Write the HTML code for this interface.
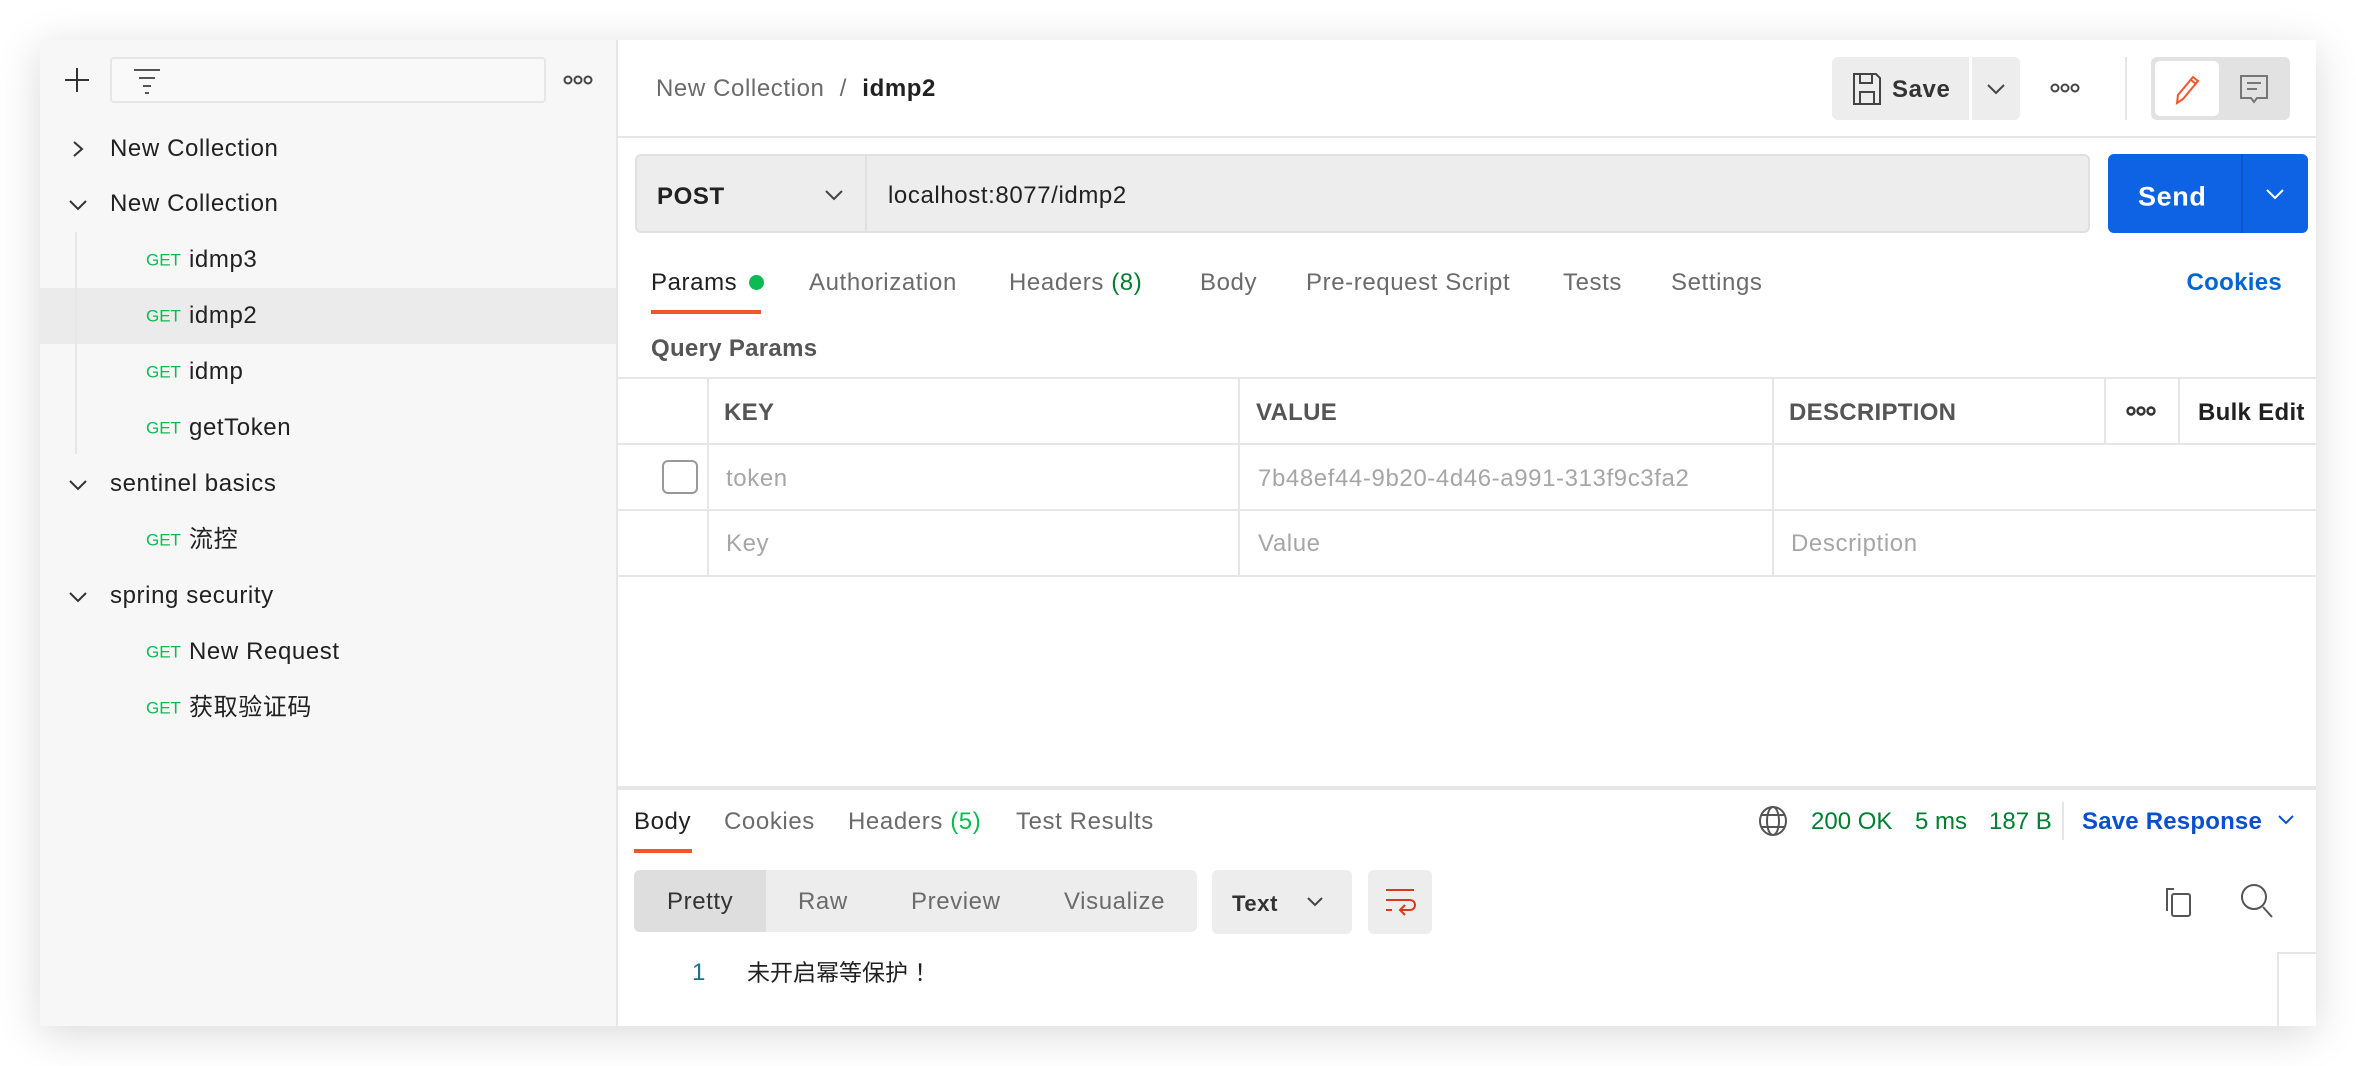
<!DOCTYPE html>
<html><head><meta charset="utf-8"><style>
*{box-sizing:border-box;margin:0;padding:0}
body{width:2356px;height:1066px;background:#fff;font-family:"Liberation Sans","Noto Sans CJK SC",sans-serif;color:#212121;position:relative;overflow:hidden;font-size:24px;letter-spacing:0.6px}
.a{position:absolute;white-space:nowrap}
.win{position:absolute;left:40px;top:40px;width:2276px;height:986px;background:#fff;box-shadow:0 8px 40px rgba(0,0,0,.15);overflow:hidden}
.t{position:absolute;white-space:nowrap;line-height:1;transform:translateY(calc(-50% + 2px))}
.g{color:#6b6b6b}
.get{color:#0cbb52;font-size:17px;letter-spacing:0}
.hl{position:absolute;height:2px;background:#e6e6e6}
.vl{position:absolute;width:2px;background:#e6e6e6}
</style></head><body>
<div class="win">
<div class="a" style="left:0;top:0;width:578px;height:986px;background:#f7f7f7;border-right:2px solid #e6e6e6"></div>
<svg class="a" style="left:24px;top:27px" width="26" height="26"><path d="M13 1v24M1 13h24" stroke="#333" stroke-width="2"/></svg>
<div class="a" style="left:70px;top:17px;width:436px;height:46px;border:2px solid #e6e6e6;border-radius:4px;background:#f9f9f9"></div>
<svg class="a" style="left:92px;top:28px" width="30" height="26"><path d="M2 2h26M7 10h16M11 18h8M13 25h4" stroke="#555" stroke-width="2"/></svg>
<svg class="a" style="left:523px;top:34px" width="30" height="12"><g stroke="#444" stroke-width="2" fill="none"><circle cx="5" cy="6" r="3.5"/><circle cx="15" cy="6" r="3.5"/><circle cx="25" cy="6" r="3.5"/></g></svg>

<svg class="a" style="left:31px;top:100px" width="14" height="18"><path d="M3 2l8 7-8 7" stroke="#333" stroke-width="2" fill="none"/></svg>
<div class="t" style="left:70px;top:107px">New Collection</div>
<svg class="a" style="left:28px;top:158px" width="20" height="14"><path d="M2 3l8 8 8-8" stroke="#333" stroke-width="2" fill="none"/></svg>
<div class="t" style="left:70px;top:162px">New Collection</div>
<div class="a" style="left:0;top:248px;width:576px;height:56px;background:#ebebeb"></div>
<div class="vl" style="left:35px;top:192px;height:222px"></div>
<div class="t get" style="left:106px;top:218px">GET</div><div class="t" style="left:149px;top:218px">idmp3</div>
<div class="t get" style="left:106px;top:274px">GET</div><div class="t" style="left:149px;top:274px">idmp2</div>
<div class="t get" style="left:106px;top:330px">GET</div><div class="t" style="left:149px;top:330px">idmp</div>
<div class="t get" style="left:106px;top:386px">GET</div><div class="t" style="left:149px;top:386px">getToken</div>
<svg class="a" style="left:28px;top:438px" width="20" height="14"><path d="M2 3l8 8 8-8" stroke="#333" stroke-width="2" fill="none"/></svg>
<div class="t" style="left:70px;top:442px">sentinel basics</div>
<div class="t get" style="left:106px;top:498px">GET</div><div class="t" style="left:149px;top:498px">流控</div>
<svg class="a" style="left:28px;top:550px" width="20" height="14"><path d="M2 3l8 8 8-8" stroke="#333" stroke-width="2" fill="none"/></svg>
<div class="t" style="left:70px;top:554px">spring security</div>
<div class="t get" style="left:106px;top:610px">GET</div><div class="t" style="left:149px;top:610px">New Request</div>
<div class="t get" style="left:106px;top:666px">GET</div><div class="t" style="left:149px;top:666px">获取验证码</div>

<div class="t g" style="left:616px;top:47px">New Collection <span style="margin:0 8px">/</span> <b style="color:#212121">idmp2</b></div>
<div class="a" style="left:1792px;top:17px;width:137px;height:63px;background:#ededed;border-radius:6px 0 0 6px"></div>
<svg class="a" style="left:1812px;top:32px" width="30" height="34"><path d="M2 2h22l4 4v26H2zM8 2v9h12V2M8 32V20h14v12" stroke="#444" stroke-width="2" fill="none"/></svg>
<div class="t" style="left:1852px;top:48px;color:#333;font-weight:bold">Save</div>
<div class="a" style="left:1932px;top:17px;width:48px;height:63px;background:#ededed;border-radius:0 6px 6px 0"></div>
<svg class="a" style="left:1946px;top:42px" width="20" height="14"><path d="M2 3l8 8 8-8" stroke="#444" stroke-width="2" fill="none"/></svg>
<svg class="a" style="left:2010px;top:42px" width="30" height="12"><g stroke="#444" stroke-width="2" fill="none"><circle cx="5" cy="6" r="3.5"/><circle cx="15" cy="6" r="3.5"/><circle cx="25" cy="6" r="3.5"/></g></svg>
<div class="vl" style="left:2085px;top:17px;height:63px"></div>
<div class="a" style="left:2111px;top:17px;width:139px;height:63px;background:#e2e2e2;border-radius:6px"></div>
<div class="a" style="left:2115px;top:21px;width:64px;height:55px;background:#fff;border-radius:5px"></div>
<svg class="a" style="left:2132px;top:33px" width="30" height="32"><path d="M5 30l1-8 15-18 5 4-15 18z M19 7l5 4" stroke="#f2542d" stroke-width="2" fill="none"/></svg>
<svg class="a" style="left:2199px;top:34px" width="30" height="32"><path d="M2 2h26v22H18l-3 4-3-4H2zM8 9h14M8 15h10" stroke="#777" stroke-width="2" fill="none"/></svg>
<div class="hl" style="left:578px;top:96px;width:1698px"></div>

<div class="a" style="left:595px;top:114px;width:1455px;height:79px;background:#ededed;border:2px solid #e0e0e0;border-radius:6px"></div>
<div class="vl" style="left:825px;top:116px;height:75px;background:#e0e0e0"></div>
<div class="t" style="left:617px;top:155px;font-weight:bold">POST</div>
<svg class="a" style="left:784px;top:148px" width="20" height="14"><path d="M2 3l8 8 8-8" stroke="#444" stroke-width="2" fill="none"/></svg>
<div class="t" style="left:848px;top:154px">localhost:8077/idmp2</div>
<div class="a" style="left:2068px;top:114px;width:200px;height:79px;background:#0d63e3;border-radius:6px"></div>
<div class="vl" style="left:2201px;top:114px;height:79px;background:#0b57c8"></div>
<div class="t" style="left:2098px;top:155px;color:#fff;font-weight:bold;font-size:27px">Send</div>
<svg class="a" style="left:2225px;top:147px" width="20" height="14"><path d="M2 3l8 8 8-8" stroke="#fff" stroke-width="2" fill="none"/></svg>

<div class="t" style="left:611px;top:241px">Params <span style="display:inline-block;width:15px;height:15px;border-radius:50%;background:#0cbb52;margin-left:4px"></span></div>
<div class="a" style="left:611px;top:270px;width:110px;height:4px;background:#f2542d"></div>
<div class="t g" style="left:769px;top:241px">Authorization</div>
<div class="t g" style="left:969px;top:241px">Headers <span style="color:#007f31">(8)</span></div>
<div class="t g" style="left:1160px;top:241px">Body</div>
<div class="t g" style="left:1266px;top:241px">Pre-request Script</div>
<div class="t g" style="left:1523px;top:241px">Tests</div>
<div class="t g" style="left:1631px;top:241px">Settings</div>
<div class="t" style="right:34px;top:241px;color:#0265d2;font-weight:bold;letter-spacing:0.3px">Cookies</div>
<div class="t g" style="left:611px;top:307px;font-weight:bold;color:#555;letter-spacing:0.3px">Query Params</div>

<div class="hl" style="left:578px;top:337px;width:1698px"></div>
<div class="hl" style="left:578px;top:403px;width:1698px"></div>
<div class="hl" style="left:578px;top:469px;width:1698px"></div>
<div class="hl" style="left:578px;top:535px;width:1698px"></div>
<div class="vl" style="left:667px;top:337px;height:200px"></div>
<div class="vl" style="left:1198px;top:337px;height:200px"></div>
<div class="vl" style="left:1732px;top:337px;height:200px"></div>
<div class="vl" style="left:2064px;top:337px;height:68px"></div>
<div class="vl" style="left:2138px;top:337px;height:68px"></div>
<div class="t" style="left:684px;top:371px;font-weight:bold;color:#555;letter-spacing:0.3px">KEY</div>
<div class="t" style="left:1216px;top:371px;font-weight:bold;color:#555;letter-spacing:0.3px">VALUE</div>
<div class="t" style="left:1749px;top:371px;font-weight:bold;color:#555;letter-spacing:0.3px">DESCRIPTION</div>
<svg class="a" style="left:2086px;top:365px" width="30" height="12"><g stroke="#333" stroke-width="2.4" fill="none"><circle cx="5" cy="6" r="3.5"/><circle cx="15" cy="6" r="3.5"/><circle cx="25" cy="6" r="3.5"/></g></svg>
<div class="t" style="left:2158px;top:371px;font-weight:bold;letter-spacing:0.3px">Bulk Edit</div>
<div class="a" style="left:622px;top:420px;width:36px;height:34px;border:2px solid #999;border-radius:6px"></div>
<div class="t" style="left:686px;top:437px;color:#a6a6a6">token</div>
<div class="t" style="left:1218px;top:437px;color:#a6a6a6">7b48ef44-9b20-4d46-a991-313f9c3fa2</div>
<div class="t" style="left:686px;top:502px;color:#a6a6a6">Key</div>
<div class="t" style="left:1218px;top:502px;color:#a6a6a6">Value</div>
<div class="t" style="left:1751px;top:502px;color:#a6a6a6">Description</div>

<div class="a" style="left:578px;top:746px;width:1698px;height:4px;background:#e6e6e6"></div>
<div class="t" style="left:594px;top:780px">Body</div>
<div class="a" style="left:594px;top:809px;width:58px;height:4px;background:#f2542d"></div>
<div class="t g" style="left:684px;top:780px">Cookies</div>
<div class="t g" style="left:808px;top:780px">Headers <span style="color:#0cbb52">(5)</span></div>
<div class="t g" style="left:976px;top:780px">Test Results</div>
<svg class="a" style="left:1718px;top:765px" width="30" height="32"><ellipse cx="15" cy="16" rx="13" ry="14" stroke="#555" stroke-width="2" fill="none"/><ellipse cx="15" cy="16" rx="6" ry="14" stroke="#555" stroke-width="2" fill="none"/><path d="M3 10h24M3 22h24" stroke="#555" stroke-width="2"/></svg>
<div class="t" style="left:1771px;top:780px;color:#007f31;letter-spacing:0">200 OK</div>
<div class="t" style="left:1875px;top:780px;color:#007f31;letter-spacing:0">5 ms</div>
<div class="t" style="left:1949px;top:780px;color:#007f31;letter-spacing:0">187 B</div>
<div class="vl" style="left:2022px;top:762px;height:38px"></div>
<div class="t" style="left:2042px;top:780px;color:#0b4fd1;font-weight:bold;letter-spacing:0.2px">Save Response</div>
<svg class="a" style="left:2237px;top:774px" width="18" height="12"><path d="M2 2l7 7 7-7" stroke="#0b4fd1" stroke-width="2" fill="none"/></svg>

<div class="a" style="left:594px;top:830px;width:563px;height:62px;background:#ededed;border-radius:6px"></div>
<div class="a" style="left:594px;top:830px;width:132px;height:62px;background:#dedede;border-radius:6px 0 0 6px"></div>
<div class="t" style="left:627px;top:860px;color:#333">Pretty</div>
<div class="t g" style="left:758px;top:860px">Raw</div>
<div class="t g" style="left:871px;top:860px">Preview</div>
<div class="t g" style="left:1024px;top:860px">Visualize</div>
<div class="a" style="left:1172px;top:830px;width:140px;height:64px;background:#ededed;border-radius:6px"></div>
<div class="t" style="left:1192px;top:862px;color:#333;font-weight:bold;font-size:22px">Text</div>
<svg class="a" style="left:1266px;top:856px" width="18" height="12"><path d="M2 2l7 7 7-7" stroke="#444" stroke-width="2" fill="none"/></svg>
<div class="a" style="left:1328px;top:830px;width:64px;height:64px;background:#ededed;border-radius:6px"></div>
<svg class="a" style="left:1343px;top:846px" width="34" height="32"><path d="M3 4h28M3 14h24a5 5 0 010 10h-9M22 19l-5 5 5 5M3 24h6" stroke="#d83a1d" stroke-width="2" fill="none"/></svg>
<svg class="a" style="left:2122px;top:845px" width="34" height="34"><path d="M12 4h-7v22" stroke="#555" stroke-width="2" fill="none"/><rect x="10" y="9" width="18" height="22" rx="2" stroke="#555" stroke-width="2" fill="none"/></svg>
<svg class="a" style="left:2199px;top:842px" width="36" height="38"><circle cx="15" cy="15" r="12" stroke="#555" stroke-width="2" fill="none"/><path d="M24 25l9 10" stroke="#555" stroke-width="2"/></svg>
<div class="t" style="left:652px;top:931px;color:#1f6f8b">1</div>
<div class="t" style="left:707px;top:931px;font-size:23px;letter-spacing:0">未开启幂等保护 ！</div>
<div class="a" style="left:2237px;top:912px;width:40px;height:80px;border-left:2px solid #e6e6e6;border-top:2px solid #e6e6e6"></div>
</div>
</body></html>
